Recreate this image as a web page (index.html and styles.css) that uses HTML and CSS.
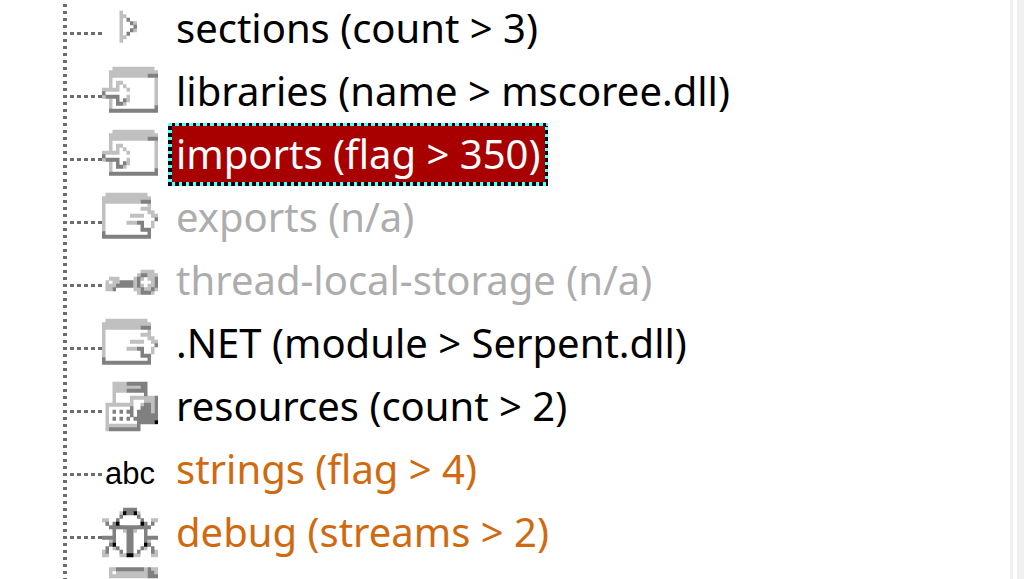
FILE: index.html
```html
<!DOCTYPE html>
<html lang="en">
<head>
<meta charset="utf-8">
<title>File indicators</title>
<link rel="stylesheet" href="styles.css">
</head>
<body>
<svg class="sprites" aria-hidden="true">
  <symbol id="expand" viewBox="0 -0.5 16 18">
    <path class="light" d="M5 4h1M5 5h2M5 6h1M5 7h1M9 7h1M5 8h1M5 9h1M9 9h1M5 10h1M5 11h2M5 12h1"/>
    <path class="dark" d="M7 6h1M8 7h1M9 8h1M8 9h1M7 10h1"/>
  </symbol>
  <symbol id="incoming" viewBox="0 -0.5 16 18">
    <path class="light" d="M3 2h12M2 3h14M2 4h11M2 5h1M15 5h1M2 6h1M4 6h2M15 6h1M2 7h1M4 7h1M6 7h1M15 7h1M0 8h5M7 8h1M15 8h1M15 9h1M0 10h1M7 10h1M15 10h1M2 11h1M7 11h1M15 11h1M2 12h1M6 12h1M15 12h1M2 13h1"/>
    <path class="dark" d="M13 4h3M0 9h1M1 10h4M4 11h1M6 11h1M4 12h2M15 13h1M2 14h14"/>
  </symbol>
  <symbol id="outgoing" viewBox="0 -0.5 16 18">
    <path class="light" d="M1 2h12M0 3h14M0 4h11M0 5h1M13 5h1M0 6h1M11 6h3M0 7h1M13 7h2M0 8h1M8 8h4M14 8h2M0 9h1M0 10h1M7 10h3M14 10h1M0 11h1M14 11h1M0 12h1"/>
    <path class="dark" d="M11 4h3M15 9h1M10 10h2M11 11h1M11 12h3M0 13h1M13 13h1M0 14h14"/>
  </symbol>
  <symbol id="key" viewBox="0 -0.5 16 18">
    <path class="light" d="M11 6h4M10 7h1M13 7h3M2 8h3M9 8h1M11 8h1M13 8h2M1 9h1M3 9h2M9 9h1M14 9h1M1 10h3M9 10h1M11 10h1M13 10h2M1 11h2M9 11h2M12 11h4M10 12h1M14 12h1"/>
    <path class="dark" d="M11 7h2M10 8h1M15 8h1M5 9h4M10 9h1M15 9h1M4 10h5M10 10h1M15 10h1M3 11h1M11 11h1M14 11h1M11 12h3"/>
  </symbol>
  <symbol id="resources" viewBox="0 -0.5 16 18">
    <path class="light" d="M3 2h4M3 3h8M3 4h4M3 5h1M3 6h1M8 6h7M3 7h1M8 7h1M1 8h8M1 9h1M1 10h1M1 11h1M1 12h1M1 13h1M1 14h9M1 15h1M12 7h3M11 8h1M14 8h1M14 9h1M14 10h1"/>
    <path class="dark" d="M7 2h6M11 3h2M7 4h6M12 5h1M15 6h1M15 7h1M12 8h2M15 8h1M8 9h1M11 9h3M15 9h1M3 10h1M5 10h1M7 10h2M10 10h4M15 10h1M8 11h1M10 11h6M3 12h1M5 12h1M7 12h1M9 12h7M10 13h5M10 14h1M2 15h9"/>
    <path class="black" d="M15 13h1"/>
  </symbol>
  <symbol id="bug" viewBox="0 -0.5 16 18">
    <path class="light" d="M5 3h1M10 3h1M0 5h2M14 5h2M1 6h1M5 7h1M10 7h1M6 8h1M9 8h1M2 11h1M13 11h1M3 13h1M12 13h1M0 14h2M14 14h2M0 15h2M5 15h2M9 15h2M14 15h2"/>
    <path class="dark" d="M6 2h4M7 3h2M5 4h1M10 4h1M4 5h1M11 5h1M1 6h1M3 6h1M12 6h1M14 6h1M2 7h3M5 7h6M11 7h3M3 8h1M7 8h2M12 8h1M3 9h1M7 9h2M12 9h1M0 10h4M7 10h2M12 10h4M3 11h1M7 11h2M12 11h1M2 12h1M7 12h2M13 12h1M1 13h1M4 13h1M7 13h2M11 13h1M14 13h1M1 14h1M5 14h1M7 14h2M10 14h1M14 14h1"/>
    <path class="black" d="M6 3h1M9 3h1M4 6h1M11 6h1M3 12h1M12 12h1M7 15h2"/>
  </symbol>
  <symbol id="page" viewBox="0 -0.5 16 18">
    <path class="light" d="M2 1h2M12 1h1M14 1h2M2 2h1M4 2h9M15 2h1M2 3h11"/>
    <path class="dark" d="M4 1h8M13 1h1M13 2h2M13 3h3"/>
  </symbol>
</svg>
<div class="pane">
  <ul class="tree" role="tree" aria-label="File indicators">
    <li class="node" role="treeitem" aria-expanded="false"><span class="branch"></span><svg class="icon"><use href="#expand"/></svg><span class="label">sections (count &gt; 3)</span></li>
    <li class="node" role="treeitem"><span class="branch"></span><svg class="icon"><use href="#incoming"/></svg><span class="label">libraries (name &gt; mscoree.dll)</span></li>
    <li class="node" role="treeitem" aria-selected="true"><span class="branch"></span><svg class="icon"><use href="#incoming"/></svg><span class="label selected">imports (flag &gt; 350)</span></li>
    <li class="node" role="treeitem"><span class="branch"></span><svg class="icon"><use href="#outgoing"/></svg><span class="label muted">exports (n/a)</span></li>
    <li class="node" role="treeitem"><span class="branch"></span><svg class="icon"><use href="#key"/></svg><span class="label muted">thread-local-storage (n/a)</span></li>
    <li class="node" role="treeitem"><span class="branch"></span><svg class="icon"><use href="#outgoing"/></svg><span class="label">.NET (module &gt; Serpent.dll)</span></li>
    <li class="node" role="treeitem"><span class="branch"></span><svg class="icon"><use href="#resources"/></svg><span class="label">resources (count &gt; 2)</span></li>
    <li class="node" role="treeitem"><span class="branch"></span><span class="icon letters">abc</span><span class="label warning">strings (flag &gt; 4)</span></li>
    <li class="node" role="treeitem"><span class="branch"></span><svg class="icon"><use href="#bug"/></svg><span class="label warning">debug (streams &gt; 2)</span></li>
    <li class="node" role="treeitem"><span class="branch"></span><svg class="icon"><use href="#page"/></svg></li>
  </ul>
  <div class="splitter"></div>
</div>
</body>
</html>
```
FILE: styles.css
```css
body {
  margin: 0;
  background: #fff;
  color: #000;
  font-family: "Noto Sans", "Open Sans", sans-serif;
  font-size: 40px;
}
.sprites {
  display: none;
}
.pane {
  display: flex;
  height: 100vh;
  overflow: hidden;
}
.tree {
  flex: 1;
  margin: -3px 0 0;
  padding: 0 0 0 63px;
  list-style: none;
}
.node {
  display: flex;
  height: 63px;
}
.branch {
  width: 39px;
  background:
    repeating-linear-gradient(to bottom, #6d6d6d 0 3px, transparent 3px 7px) 0 0 / 4px 100% no-repeat,
    repeating-linear-gradient(to right, #6d6d6d 0 4px, transparent 4px 7px) 7px 35px / 100% 3px no-repeat;
}
.icon {
  width: 56px;
  height: 63px;
  margin-right: 10px;
  stroke-width: 1.1;
}
.light {
  stroke: #c0c0c0;
}
.dark {
  stroke: #808080;
}
.black {
  stroke: #000;
}
.letters {
  font: 31px/72px "Liberation Sans", sans-serif;
  text-align: center;
}
.label {
  padding: 0 8px;
  line-height: 62px;
  white-space: nowrap;
}
.selected {
  color: #fff;
  background:
    repeating-linear-gradient(to right, #5ff 0 4px, #000 4px 7px) top / 100% 3px no-repeat,
    repeating-linear-gradient(to right, #000 0 4px, #5ff 4px 7px) bottom / 100% 4px no-repeat,
    repeating-linear-gradient(to bottom, #5ff 0 3px, #000 3px 7px) left / 4px 100% no-repeat,
    repeating-linear-gradient(to bottom, #000 0 4px, #5ff 4px 7px) right / 3px 100% no-repeat,
    #a80000;
}
.muted {
  color: #adadad;
}
.warning {
  color: #d06a10;
}
.splitter {
  width: 4px;
  border: solid #f0f0f0;
  border-width: 0 7px 0 3px;
}
```
